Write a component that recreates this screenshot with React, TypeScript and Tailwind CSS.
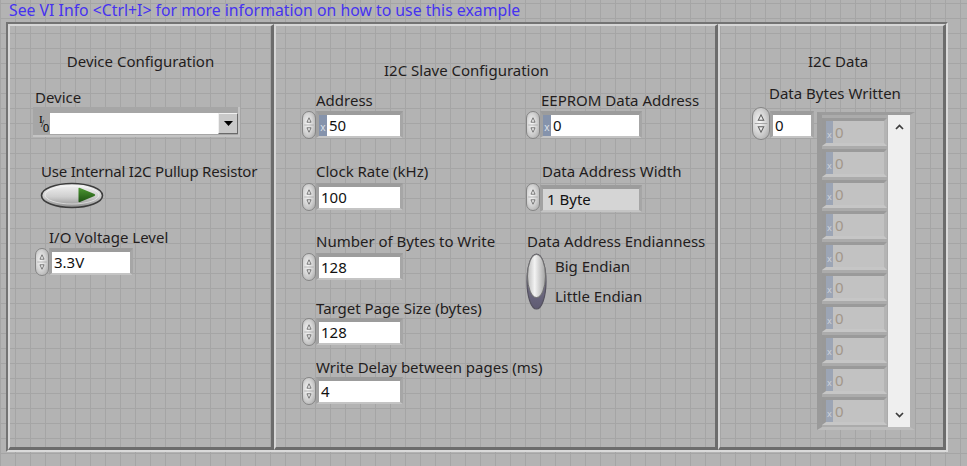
const LABEL = "h-[20px] leading-[20px] whitespace-nowrap";

function Spinner({ big = false }: { big?: boolean }) {
  return (
    <div
      className={
        big
          ? "h-[33px] w-[18px] shrink-0 rounded-full border border-[#858585] bg-[radial-gradient(ellipse_at_40%_45%,#f6f6f6_0%,#d6d6d6_45%,#a4a4a4_100%)]"
          : "h-[28px] w-[14px] shrink-0 rounded-full border border-[#858585] bg-[radial-gradient(ellipse_at_40%_45%,#f6f6f6_0%,#d6d6d6_45%,#a4a4a4_100%)]"
      }
    >
      <svg viewBox="0 0 14 28" preserveAspectRatio="none" className="block h-full w-full">
        <path d="M1.5 14 H12.5" stroke="#a0a0a0" strokeWidth="0.8" />
        <path d="M4.6 11 L7 6.2 L9.4 11 Z" fill="#eeeeee" stroke="#5e5e5e" strokeWidth="0.9" />
        <path d="M4.6 17 L9.4 17 L7 21.8 Z" fill="#eeeeee" stroke="#5e5e5e" strokeWidth="0.9" />
      </svg>
    </div>
  );
}

function Frame({ children, className = "" }: { children: React.ReactNode; className?: string }) {
  return (
    <div
      className={`flex border-t-[4px] border-l-[3px] border-r-[3px] border-b-[2px] border-t-[#9c9c9c] border-l-[#a2a2a2] border-r-[#a6a6a6] border-b-[#c4c4c4] ${className}`}
    >
      {children}
    </div>
  );
}

function Radix() {
  return (
    <div className="flex h-[21px] w-[8px] items-end justify-center bg-[#8593ac] pb-[4px] text-[10px] leading-none text-[#dde1ea]">
      x
    </div>
  );
}

function Numeric({
  value,
  width,
  radix = false,
}: {
  value: string;
  width: string;
  radix?: boolean;
}) {
  return (
    <div className="flex items-start">
      <Spinner />
      <Frame>
        {radix && <Radix />}
        <div className={`h-[21px] bg-white pl-[2px] text-[15px] leading-[21px] text-[#111] ${width}`}>{value}</div>
      </Frame>
    </div>
  );
}

function HToggle() {
  return (
    <svg width="64" height="27" viewBox="0 0 64 27">
      <defs>
        <linearGradient id="htg" x1="0" y1="0" x2="0" y2="1">
          <stop offset="0" stopColor="#f4f4f4" />
          <stop offset="0.55" stopColor="#cfcfcf" />
          <stop offset="1" stopColor="#8e8e8e" />
        </linearGradient>
        <linearGradient id="hgr" x1="0" y1="0" x2="0" y2="1">
          <stop offset="0" stopColor="#4c9632" />
          <stop offset="1" stopColor="#1d5212" />
        </linearGradient>
      </defs>
      <ellipse cx="32" cy="13.5" rx="30.5" ry="12" fill="url(#htg)" stroke="#3c3c3c" strokeWidth="1.6" />
      <ellipse cx="32" cy="13" rx="27" ry="9" fill="none" stroke="#ffffff" strokeOpacity="0.5" strokeWidth="1" />
      <path d="M38.5 6.5 Q38.5 5.5 40 6 L54.5 12 Q56 13 54.5 14 L40 20 Q38.5 20.5 38.5 19.5 Z" fill="url(#hgr)" />
    </svg>
  );
}

function VToggle() {
  return (
    <svg width="21" height="57" viewBox="0 0 21 57">
      <defs>
        <linearGradient id="vtg" x1="0" y1="0" x2="1" y2="0">
          <stop offset="0" stopColor="#bdbdbd" />
          <stop offset="0.4" stopColor="#f3f3f3" />
          <stop offset="1" stopColor="#a3a3a3" />
        </linearGradient>
        <linearGradient id="vdk" x1="0" y1="0" x2="0" y2="1">
          <stop offset="0" stopColor="#8a869a" />
          <stop offset="1" stopColor="#5e5a72" />
        </linearGradient>
      </defs>
      <ellipse cx="10.5" cy="28.5" rx="9.5" ry="27.5" fill="url(#vdk)" stroke="#55525f" strokeWidth="1.2" />
      <ellipse cx="10.5" cy="23" rx="9" ry="21.5" fill="url(#vtg)" stroke="#6e6e6e" strokeWidth="1" />
    </svg>
  );
}

function IOIcon() {
  return (
    <div className="relative h-[21px] w-[12px] shrink-0 font-['Liberation_Serif',serif] text-[11px] leading-none text-black">
      <span className="absolute left-[1px] top-[1px]">I</span>
      <span className="absolute left-[3px] top-[5px]">/</span>
      <span className="absolute left-[5px] top-[10px] font-['Liberation_Sans',sans-serif]">0</span>
    </div>
  );
}

function ArrayCell() {
  return (
    <div className="flex h-[31px] items-start pt-[3px]">
      <div className="flex border-t-[3px] border-l-[4px] border-b-[3px] border-r-[3px] border-t-[#9a9a9a] border-l-[#999] border-b-[#c6c6c6] border-r-[#b4b4b4]">
        <div className="flex h-[22px] w-[7px] items-end justify-center bg-[#9ca5b5] pb-[4px] text-[9px] leading-none text-[#cfd3da]">
          x
        </div>
        <div className="h-[22px] w-[51px] bg-[#c2c2c2] pl-[2px] text-[15px] leading-[22px] text-[#a2978a]">0</div>
      </div>
    </div>
  );
}

export default function App() {
  const cells = Array.from({ length: 10 }, (_, i) => i);
  return (
    <div className="h-[466px] w-[967px] overflow-hidden bg-[#b3b3b3] bg-[image:linear-gradient(to_right,#a5a5a5_1px,transparent_1px),linear-gradient(to_bottom,#a5a5a5_1px,transparent_1px)] bg-[size:15px_15px] bg-[position:0px_3px] font-['Noto_Sans',sans-serif] text-[15px] text-[#231d1d]">
      <div className="h-[22px] pl-[9px] text-[15.8px] leading-[21px] text-[#4632f0]">
        See VI Info &lt;Ctrl+I&gt; for more information on how to use this example
      </div>

      <div className="ml-[6px] flex h-[430px] w-[942px] border-t-2 border-l-2 border-r-2 border-b-2 border-t-[#737373] border-l-[#737373] border-r-[#dadada] border-b-[#dadada]">
        {/* Device Configuration */}
        <div className="flex h-full w-[266px] flex-col border-t-2 border-l-2 border-r-[3px] border-b-[3px] border-t-[#d6d6d6] border-l-[#d6d6d6] border-r-[#6c6c6c] border-b-[#6c6c6c]">
          <div className={`mt-[25px] text-center ${LABEL}`}>Device Configuration</div>
          <div className={`ml-[25px] mt-[16px] ${LABEL}`}>Device</div>
          <div className="ml-[23px] flex h-[30px] w-[207px] items-start border-b-2 border-r-2 border-[#c4c4c4] bg-[#a6a6a6] pl-[5px] pt-[6px]">
            <IOIcon />
            <div className="h-[21px] w-[168px] bg-white" />
            <div className="flex h-[21px] w-[20px] items-center justify-center border border-t-[#f0f0f0] border-l-[#f0f0f0] border-r-[#6a6a6a] border-b-[#6a6a6a] bg-[#c9c9c9]">
              <svg width="9" height="5" viewBox="0 0 9 5">
                <path d="M0 0 H9 L4.5 5 Z" fill="#000" />
              </svg>
            </div>
          </div>
          <div className={`ml-[31px] mt-[24px] tracking-[-0.2px] ${LABEL}`}>Use Internal I2C Pullup Resistor</div>
          <div className="ml-[30px] mt-[1px]">
            <HToggle />
          </div>
          <div className={`ml-[39px] mt-[18px] ${LABEL}`}>I/O Voltage Level</div>
          <div className="ml-[25px] mt-[1px]">
            <Numeric value="3.3V" width="w-[78px]" />
          </div>
        </div>

        {/* I2C Slave Configuration */}
        <div className="flex h-full w-[444px] flex-col border-t-2 border-l-2 border-r-[3px] border-b-[3px] border-t-[#d6d6d6] border-l-[#d6d6d6] border-r-[#6c6c6c] border-b-[#6c6c6c]">
          <div className={`ml-[108px] mt-[34px] ${LABEL}`}>I2C Slave Configuration</div>
          <div className="ml-[26px] mt-[10px] flex">
            <div className="flex w-[224px] flex-col">
              <div className={`ml-[14px] ${LABEL}`}>Address</div>
              <div className="mt-[1px]">
                <Numeric value="50" width="w-[73px]" radix />
              </div>
              <div className={`ml-[14px] mt-[22px] ${LABEL}`}>Clock Rate (kHz)</div>
              <div className="mt-[2px]">
                <Numeric value="100" width="w-[81px]" />
              </div>
              <div className={`ml-[14px] mt-[20px] ${LABEL}`}>Number of Bytes to Write</div>
              <div className="mt-[2px]">
                <Numeric value="128" width="w-[81px]" />
              </div>
              <div className={`ml-[14px] mt-[17px] ${LABEL}`}>Target Page Size (bytes)</div>
              <div>
                <Numeric value="128" width="w-[81px]" />
              </div>
              <div className={`ml-[14px] mt-[11px] ${LABEL}`}>Write Delay between pages (ms)</div>
              <div>
                <Numeric value="4" width="w-[81px]" />
              </div>
            </div>
            <div className="flex flex-col">
              <div className={`ml-[15px] ${LABEL}`}>EEPROM Data Address</div>
              <div className="mt-[1px]">
                <Numeric value="0" width="w-[88px]" radix />
              </div>
              <div className={`ml-[16px] mt-[22px] ${LABEL}`}>Data Address Width</div>
              <div className="mt-[2px] flex items-start">
                <Spinner />
                <Frame className="mt-[2px]">
                  <div className="h-[21px] w-[96px] bg-[#d5d5d5] pl-[4px] text-[15px] leading-[21px] text-[#111]">1 Byte</div>
                </Frame>
              </div>
              <div className={`ml-[1px] mt-[19px] ${LABEL}`}>Data Address Endianness</div>
              <div className="mt-[2px] flex">
                <VToggle />
                <div className="ml-[8px] flex flex-col pt-[3px]">
                  <div className={LABEL}>Big Endian</div>
                  <div className={`mt-[10px] ${LABEL}`}>Little Endian</div>
                </div>
              </div>
            </div>
          </div>
        </div>

        {/* I2C Data */}
        <div className="flex h-full w-[228px] flex-col border-t-2 border-l-2 border-r-[3px] border-b-[3px] border-t-[#d6d6d6] border-l-[#d6d6d6] border-r-[#6c6c6c] border-b-[#6c6c6c]">
          <div className={`ml-[88px] mt-[25px] ${LABEL}`}>I2C Data</div>
          <div className={`ml-[49px] mt-[12px] ${LABEL}`}>Data Bytes Written</div>
          <div className="ml-[32px] mt-[4px] flex items-start">
            <Spinner big />
            <Frame className="mt-[4px]">
              <div className="h-[21px] w-[38px] bg-white pl-[2px] text-[15px] leading-[21px] text-[#111]">0</div>
            </Frame>
            <div className="ml-[3px] mt-[5px] flex h-[318px] w-[98px] border-t-[3px] border-l-[5px] border-b-[3px] border-r-[5px] border-t-[#9c9c9c] border-l-[#9a9a9a] border-b-[#bdbdbd] border-r-[#b1b1b1] bg-[#ababab]">
              <div className="flex w-[66px] flex-col">
                {cells.map((i) => (
                  <ArrayCell key={i} />
                ))}
              </div>
              <div className="flex h-full w-[22px] flex-col items-center justify-between bg-[#efefef] py-[9px]">
                <svg width="9" height="6" viewBox="0 0 9 6">
                  <path d="M1 5 L4.5 1.5 L8 5" fill="none" stroke="#3c3c3c" strokeWidth="1.7" />
                </svg>
                <svg width="9" height="6" viewBox="0 0 9 6">
                  <path d="M1 1 L4.5 4.5 L8 1" fill="none" stroke="#3c3c3c" strokeWidth="1.7" />
                </svg>
              </div>
            </div>
          </div>
        </div>
      </div>
    </div>
  );
}
